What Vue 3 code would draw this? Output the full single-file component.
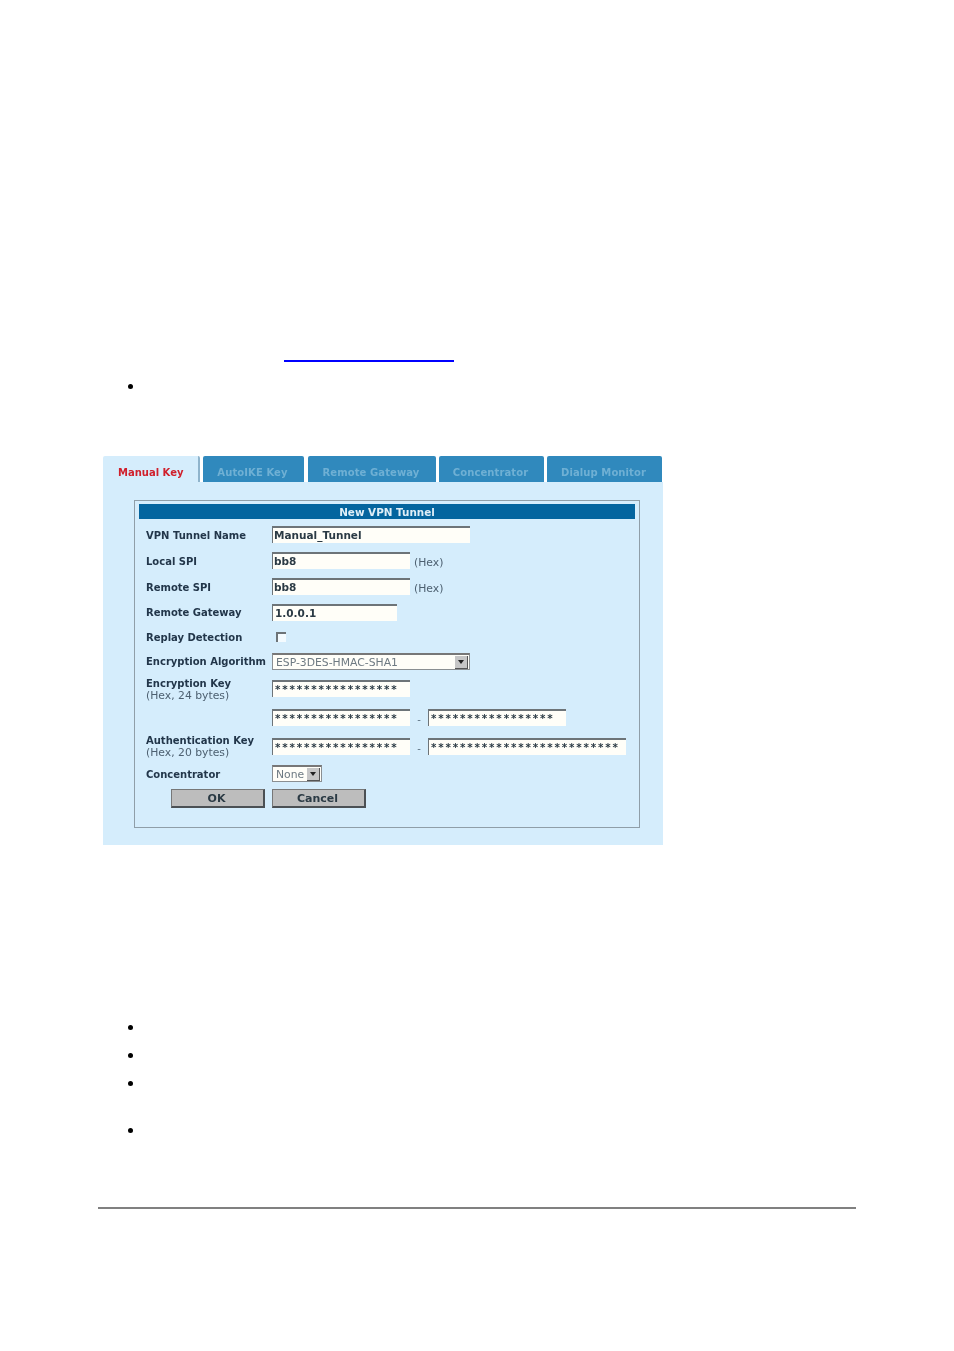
<script setup>
const tabs = ['AutoIKE Key', 'Remote Gateway', 'Concentrator', 'Dialup Monitor']
const stars = n => '*'.repeat(n)
</script>

<template>
  <main class="page">
    <a class="link" href="#" aria-label="link"></a>
    <ul class="list first">
      <li>&nbsp;</li>
    </ul>

    <section class="shot">
      <nav class="tabs">
        <div class="tab active">Manual Key</div>
        <div v-for="t in tabs" :key="t" class="tab" :class="'t' + tabs.indexOf(t)">{{ t }}</div>
      </nav>
      <div class="body">
        <div class="box">
          <div class="title">New VPN Tunnel</div>
          <div class="form">
            <div class="lbl low">VPN Tunnel Name</div>
            <div class="ctl"><div class="inp w198">Manual_Tunnel</div></div>

            <div class="lbl low">Local SPI</div>
            <div class="ctl"><div class="inp w138">bb8</div><span class="hex">(Hex)</span></div>

            <div class="lbl low">Remote SPI</div>
            <div class="ctl"><div class="inp w138">bb8</div><span class="hex">(Hex)</span></div>

            <div class="lbl">Remote Gateway</div>
            <div class="ctl"><div class="inp w125 gw">1.0.0.1</div></div>

            <div class="lbl">Replay Detection</div>
            <div class="ctl"><span class="check"></span></div>

            <div class="lbl">Encryption Algorithm</div>
            <div class="ctl">
              <div class="sel w198"><span>ESP-3DES-HMAC-SHA1</span><i class="arrow"></i></div>
            </div>

            <div class="lbl two up2">Encryption Key<small>(Hex, 24 bytes)</small></div>
            <div class="ctl"><div class="inp w138 pw">{{ stars(17) }}</div></div>

            <span></span>
            <div class="ctl">
              <div class="inp w138 pw">{{ stars(17) }}</div><span class="dash">-</span>
              <div class="inp w138 pw">{{ stars(17) }}</div>
            </div>

            <div class="lbl two up3">Authentication Key<small>(Hex, 20 bytes)</small></div>
            <div class="ctl">
              <div class="inp w138 pw">{{ stars(17) }}</div><span class="dash">-</span>
              <div class="inp w198 pw">{{ stars(26) }}</div>
            </div>

            <div class="lbl low">Concentrator</div>
            <div class="ctl">
              <div class="sel w50"><span>None</span><i class="arrow"></i></div>
            </div>

            <div class="btns">
              <button class="btn">OK</button>
              <button class="btn">Cancel</button>
            </div>
          </div>
        </div>
      </div>
    </section>

    <ul class="list second">
      <li>&nbsp;</li>
      <li>&nbsp;</li>
      <li class="tall">&nbsp;</li>
      <li>&nbsp;</li>
    </ul>
    <hr class="rule" />
  </main>
</template>

<style scoped>
.page {
  width: 758px;
  margin-left: 98px;
  padding-top: 360px;
  font-family: "Liberation Serif", serif;
  font-size: 16px;
  color: #000;
}
.link {
  display: block;
  width: 170px;
  height: 2px;
  margin-left: 186px;
  background: #0000ff;
}
.list {
  margin: 0;
  padding: 0 0 0 46px;
  list-style: disc;
}
.list li { height: 28px; line-height: 28px; }
.list li.tall { margin-bottom: 19px; }
.list.first { margin-top: 10px; }
.list.second { margin-top: 168px; }

.shot {
  width: 560px;
  height: 389px;
  margin: 56px 0 0 5px;
  display: flex;
  flex-direction: column;
  font-family: "DejaVu Sans", sans-serif;
  font-size: 10px;
  filter: blur(0.7px);
}
.tabs { display: flex; height: 26px; }
.tab {
  display: flex;
  align-items: center;
  justify-content: center;
  height: 26px;
  padding: 7px 2px 0 0;
  box-sizing: border-box;
  background: #3089bd;
  color: #6fb0d4;
  font-weight: bold;
  letter-spacing: 0.1px;
  border-radius: 2px 2px 0 0;
  margin-right: 3px;
  white-space: nowrap;
}
.tab.active {
  width: 97px;
  margin-right: 3px;
  background: #d5edfc;
  color: #d0202c;
  border-right: 2px solid #8fb4cc;
  padding-right: 0;
  justify-content: flex-start;
  padding-left: 15px;
  letter-spacing: 0;
}
.t0 { width: 101px; margin-right: 4px; }
.t1 { width: 128px; }
.t2 { width: 105px; }
.t3 { width: 115px; margin-right: 0; }
.body {
  flex: 1;
  background: #d5edfc;
  padding: 18px 23px 17px 31px;
  box-sizing: border-box;
  display: flex;
}
.box {
  flex: 1;
  border: 1px solid #8f9ea8;
  padding: 3px 4px 0;
  box-sizing: border-box;
}
.title {
  height: 15px;
  line-height: 16px;
  background: #04659f;
  color: #dfeef7;
  font-weight: bold;
  font-size: 10.4px;
  text-align: center;
}
.form {
  display: grid;
  grid-template-columns: 126px 1fr;
  grid-template-rows: 26px 26px 26px 25px 24px 27px 29px 29px 27px 24px 19px;
  padding: 7px 0 0 7px;
  color: #22364a;
}
.lbl {
  font-weight: bold;
  font-size: 10px;
  line-height: 17px;
  white-space: nowrap;
}
.lbl.low { line-height: 19px; }
.lbl.two { line-height: 12px; }
.lbl.two small { display: block; font-size: 10.8px; font-weight: normal; color: #4d6070; }
.up2 { margin-top: -2px; }
.up3 { margin-top: -3px; }
.ctl { display: flex; align-items: flex-start; }
.inp {
  height: 17px;
  box-sizing: border-box;
  padding: 0 0 0 1px;
  border-top: 2px solid #6d7478;
  border-left: 1px solid #6d7478;
  background: #fffef8;
  color: #2b3a44;
  font-weight: bold;
  font-size: 10.5px;
  line-height: 14px;
  white-space: nowrap;
  overflow: hidden;
}
.inp.gw { padding-left: 2px; }
.inp.pw { letter-spacing: 1.83px; padding-left: 2px; font-size: 10.4px; }
.w198 { width: 198px; }
.w138 { width: 138px; }
.w125 { width: 125px; }
.w50 { width: 50px; }
.hex { margin: 2px 0 0 4px; color: #4d6070; line-height: 17px; font-size: 10.8px; }
.dash { width: 18px; text-align: center; color: #5a7080; padding-top: 5px; line-height: 12px; }
.check {
  width: 10px;
  height: 10px;
  margin: 3px 0 0 4px;
  box-sizing: border-box;
  border-top: 2px solid #6d7478;
  border-left: 2px solid #6d7478;
  background: #f4fbff;
}
.sel {
  height: 17px;
  box-sizing: border-box;
  display: flex;
  justify-content: space-between;
  align-items: center;
  padding: 0 1px 0 3px;
  border: 1px solid #8a8f92;
  border-top: 2px solid #777;
  background: #fffef8;
  color: #6e7a82;
  font-size: 10.8px;
}
.arrow {
  position: relative;
  display: block;
  width: 13px;
  height: 13px;
  box-sizing: border-box;
  background: #c6c6c6;
  border-right: 1px solid #555;
  border-bottom: 1px solid #555;
}
.arrow::after {
  content: "";
  position: absolute;
  left: 3px;
  top: 4px;
  border: 3px solid transparent;
  border-top: 4px solid #222;
  border-bottom: 0;
}
.btns {
  grid-column: 1 / 3;
  display: flex;
  gap: 7px;
  padding-left: 25px;
}
.btn {
  width: 94px;
  height: 19px;
  box-sizing: border-box;
  padding: 0 2px 0 0;
  background: #bdbdbd;
  border: 1px solid #4b5054;
  border-top-color: #777;
  border-left-color: #777;
  border-bottom-width: 2px;
  border-right-width: 2px;
  color: #2b3a44;
  font: bold 11px "DejaVu Sans", sans-serif;
}
.rule {
  margin: 63px 0 0;
  height: 2px;
  border: 0;
  background: #808080;
}
</style>

<style>
html, body { background: #fff; }
</style>
